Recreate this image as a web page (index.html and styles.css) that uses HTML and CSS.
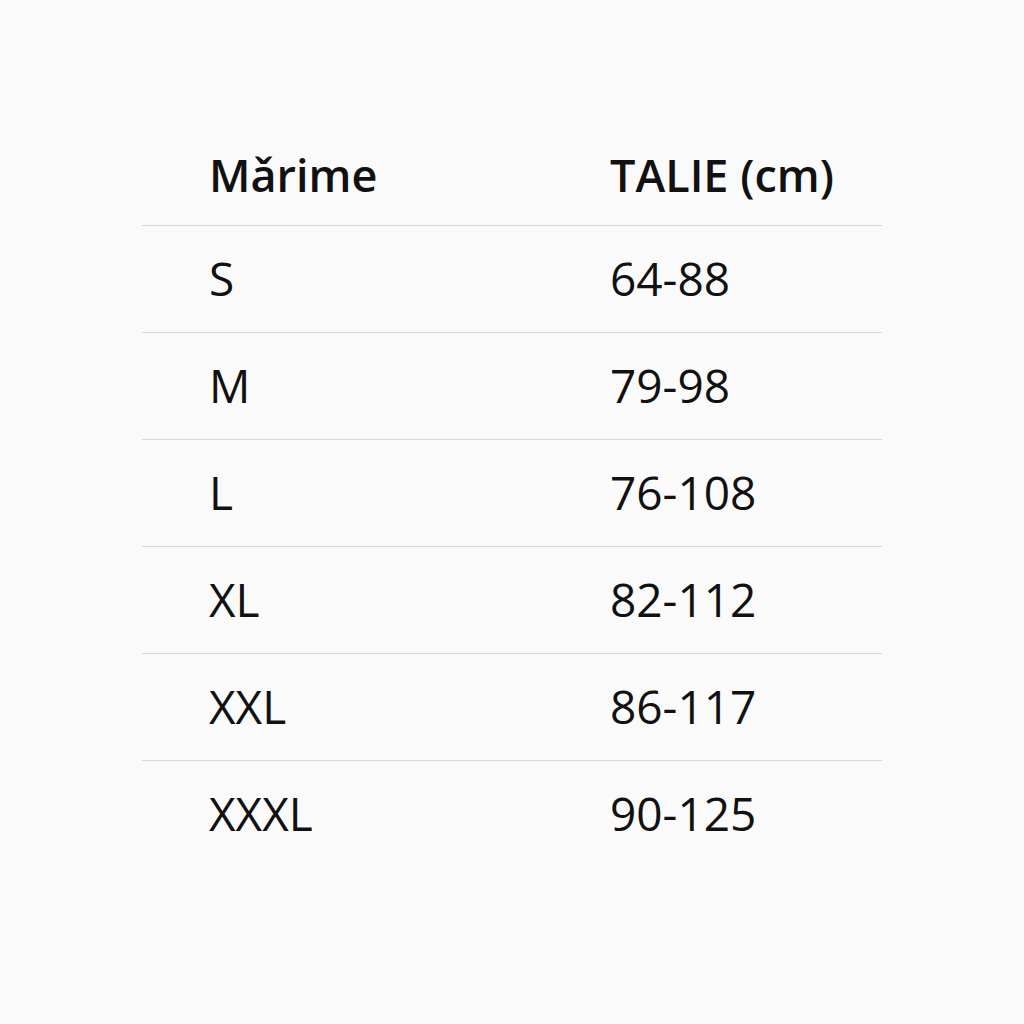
FILE: index.html
```html
<!DOCTYPE html>
<html lang="ro">
<head>
<meta charset="utf-8">
<link rel="stylesheet" href="styles.css">
<title>Mărime</title>
</head>
<body>
<div class="table">
  <div class="row head"><div class="c1">Mǎrime</div><div class="c2">TALIE (cm)</div></div>
  <div class="row"><div class="c1">S</div><div class="c2">64-88</div></div>
  <div class="row"><div class="c1">M</div><div class="c2">79-98</div></div>
  <div class="row"><div class="c1">L</div><div class="c2">76-108</div></div>
  <div class="row"><div class="c1">XL</div><div class="c2">82-112</div></div>
  <div class="row"><div class="c1">XXL</div><div class="c2">86-117</div></div>
  <div class="row last"><div class="c1">XXXL</div><div class="c2">90-125</div></div>
</div>
</body>
</html>
```
FILE: styles.css
```css
html, body {
  margin: 0;
  padding: 0;
  background: #fafafa;
}
body {
  font-family: "Open Sans", "Noto Sans", sans-serif;
  color: #111;
  padding-top: 144px;
}
.table {
  width: 740px;
  margin-left: 142px;
}
.row {
  display: grid;
  grid-template-columns: 401px 1fr;
  padding-left: 67px;
  font-size: 46px;
  line-height: 61px;
  padding-top: 22px;
  padding-bottom: 23px;
  border-bottom: 1px solid #d8d8d8;
}
.row.head {
  font-size: 45px;
  font-weight: 600;
  padding-top: 0;
  padding-bottom: 20px;
}
.row.last {
  border-bottom: none;
}
```
